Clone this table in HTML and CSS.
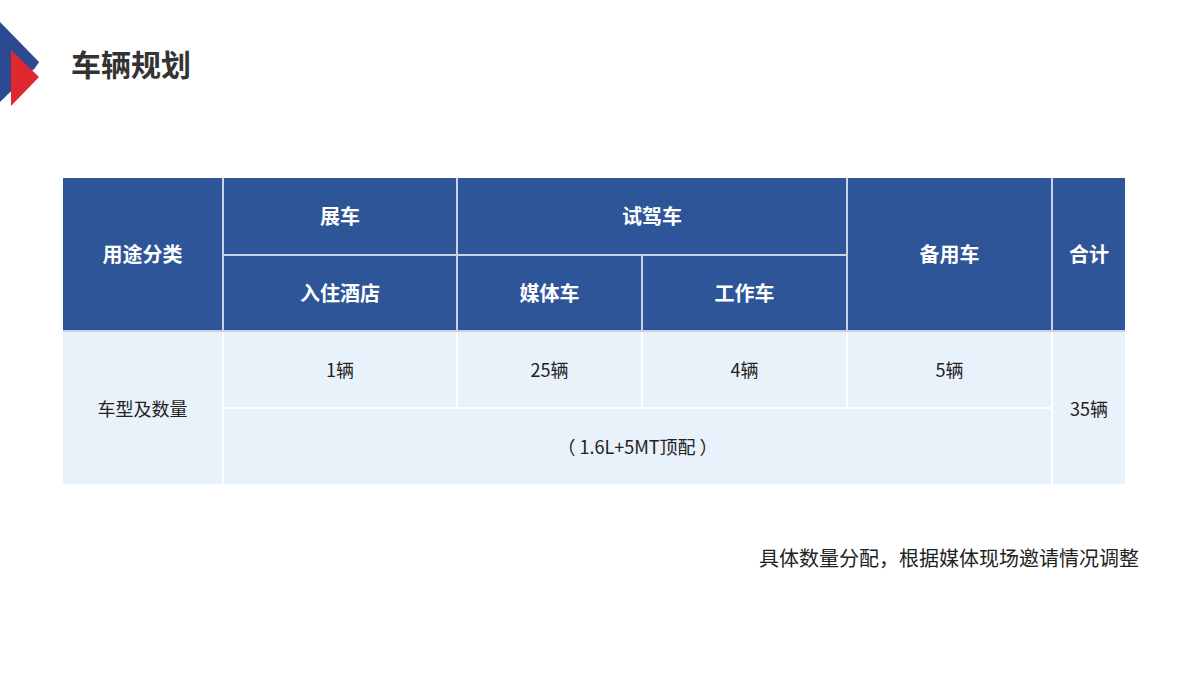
FILE: index.html
```html
<!DOCTYPE html>
<html lang="zh-CN">
<head>
<meta charset="utf-8">
<title>车辆规划</title>
<link rel="stylesheet" href="styles.css">
</head>
<body>
<header class="top">
  <svg class="logo" width="40" height="86" viewBox="0 0 40 86">
    <polygon points="0,0 39,40 35,46 0,80" fill="#2b4a91"/>
    <polygon points="11,28 39,55 11,84" fill="#e0262f"/>
  </svg>
  <h1 class="title">车辆规划</h1>
</header>
<main class="content">
  <table class="plan">
    <colgroup>
      <col class="c1"><col class="c2"><col class="c3"><col class="c4"><col class="c5"><col class="c6">
    </colgroup>
    <thead>
      <tr>
        <th rowspan="2">用途分类</th>
        <th>展车</th>
        <th colspan="2">试驾车</th>
        <th rowspan="2">备用车</th>
        <th rowspan="2">合计</th>
      </tr>
      <tr>
        <th>入住酒店</th>
        <th>媒体车</th>
        <th>工作车</th>
      </tr>
    </thead>
    <tbody>
      <tr>
        <td rowspan="2">车型及数量</td>
        <td>1辆</td>
        <td>25辆</td>
        <td>4辆</td>
        <td>5辆</td>
        <td rowspan="2">35辆</td>
      </tr>
      <tr>
        <td colspan="4">（ 1.6L+5MT顶配 ）</td>
      </tr>
    </tbody>
  </table>
  <p class="note">具体数量分配，根据媒体现场邀请情况调整</p>
</main>
</body>
</html>
```

FILE: styles.css
```css
* { box-sizing: border-box; }
html, body {
  margin: 0;
  padding: 0;
  background: #ffffff;
  width: 1200px;
  height: 675px;
  overflow: hidden;
  font-family: "Noto Sans CJK SC", "Noto Sans", sans-serif;
  color: #222;
}
.top {
  display: flex;
  align-items: center;
  padding-top: 23px;
  height: 107px;
}
.logo {
  display: block;
  flex: none;
}
.title {
  margin: 0 0 0 31px;
  font-size: 30px;
  font-weight: 700;
  color: #333333;
  line-height: 1;
  letter-spacing: 0;
  position: relative;
  top: -2px;
}
.content {
  padding: 71px 75px 0 63px;
}
.plan {
  border-collapse: collapse;
  table-layout: fixed;
  width: 1062px;
  border-style: hidden;
}
.c1 { width: 160px; }
.c2 { width: 234px; }
.c3 { width: 185px; }
.c4 { width: 205px; }
.c5 { width: 205px; }
.c6 { width: 73px; }
.plan th,
.plan td {
  height: 76.5px;
  text-align: center;
  vertical-align: middle;
  padding: 0;
  font-size: 18px;
  line-height: 1;
}
.plan th {
  background: #2e5597;
  color: #ffffff;
  font-size: 20px;
  font-weight: 700;
  border: 2px solid #c7d2e6;
}
.plan td {
  background: #e9f1fa;
  color: #222222;
  font-weight: 400;
  border: 2px solid #ffffff;
}
.plan thead tr:last-child th {
  border-bottom-color: #c7d2e6;
}
.note {
  margin: 60px -14px 0 0;
  text-align: right;
  font-size: 20px;
  line-height: 28px;
  color: #222222;
}
```
